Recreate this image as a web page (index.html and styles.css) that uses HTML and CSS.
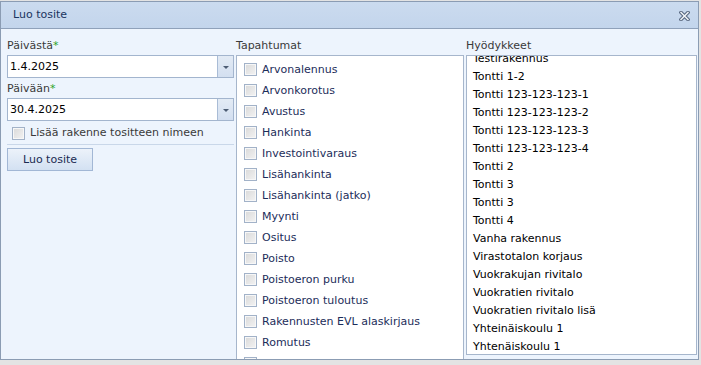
FILE: index.html
```html
<!DOCTYPE html>
<html lang="fi">
<head>
  <meta charset="UTF-8">
  <meta name="viewport" content="width=device-width, initial-scale=1.0">
  <title>Luo tosite</title>
  <link rel="stylesheet" href="styles.css">
</head>
<body>
  <div class="dialog">
    <div class="dialog-title">
      <span>Luo tosite</span>
      <span class="dialog-close">
        <svg width="11" height="10" viewBox="0 0 11 10">
          <path d="M2 1.5 L9 8.5 M9 1.5 L2 8.5" stroke="#5b6b83" stroke-width="3.6" stroke-linecap="square"/>
          <path d="M2 1.5 L9 8.5 M9 1.5 L2 8.5" stroke="#f4f7fb" stroke-width="1.4" stroke-linecap="square"/>
        </svg>
      </span>
    </div>

    <div class="dialog-body">
      <!-- vasen sarake: päivämäärät -->
      <div class="col col-form">
        <label class="field-label">Päivästä<span class="req">*</span></label>
        <div class="combo">
          <span class="combo-text">1.4.2025</span>
          <span class="combo-btn"></span>
        </div>
        <label class="field-label second">Päivään<span class="req">*</span></label>
        <div class="combo">
          <span class="combo-text">30.4.2025</span>
          <span class="combo-btn"></span>
        </div>
        <div class="check-row">
          <span class="chk"></span>
          <span>Lisää rakenne tositteen nimeen</span>
        </div>
        <div class="sep"></div>
        <button class="btn">Luo tosite</button>
      </div>

      <!-- tapahtumat -->
      <div class="col">
        <div class="col-head">Tapahtumat</div>
        <ul class="event-list">
          <li><span class="chk"></span>Arvonalennus</li>
          <li><span class="chk"></span>Arvonkorotus</li>
          <li><span class="chk"></span>Avustus</li>
          <li><span class="chk"></span>Hankinta</li>
          <li><span class="chk"></span>Investointivaraus</li>
          <li><span class="chk"></span>Lisähankinta</li>
          <li><span class="chk"></span>Lisähankinta (jatko)</li>
          <li><span class="chk"></span>Myynti</li>
          <li><span class="chk"></span>Ositus</li>
          <li><span class="chk"></span>Poisto</li>
          <li><span class="chk"></span>Poistoeron purku</li>
          <li><span class="chk"></span>Poistoeron tuloutus</li>
          <li><span class="chk"></span>Rakennusten EVL alaskirjaus</li>
          <li><span class="chk"></span>Romutus</li>
          <li><span class="chk"></span></li>
        </ul>
      </div>

      <!-- hyödykkeet -->
      <div class="col">
        <div class="col-head">Hyödykkeet</div>
        <div class="asset-box">
          <ul class="asset-list">
            <li>Testirakennus</li>
            <li>Tontti 1-2</li>
            <li>Tontti 123-123-123-1</li>
            <li>Tontti 123-123-123-2</li>
            <li>Tontti 123-123-123-3</li>
            <li>Tontti 123-123-123-4</li>
            <li>Tontti 2</li>
            <li>Tontti 3</li>
            <li>Tontti 3</li>
            <li>Tontti 4</li>
            <li>Vanha rakennus</li>
            <li>Virastotalon korjaus</li>
            <li>Vuokrakujan rivitalo</li>
            <li>Vuokratien rivitalo</li>
            <li>Vuokratien rivitalo lisä</li>
            <li>Yhteinäiskoulu 1</li>
            <li>Yhtenäiskoulu 1</li>
          </ul>
        </div>
      </div>
    </div>
  </div>
</body>
</html>
```

FILE: styles.css
```css
/* sivun tausta dialogin alla */
body { margin: 0; background: #e3e3e3; font-family: "DejaVu Sans", Verdana, sans-serif; font-size: 11px; color: #3a3a3a; }
ul { margin: 0; padding: 0; list-style: none; }

/* dialogi */
.dialog { box-sizing: border-box; width: 699px; height: 359px; margin-top: 1px; border: 1px solid #8b9cb3; background: #edf4fd; display: flex; flex-direction: column; }
.dialog-title { flex: none; height: 26px; line-height: 26px; padding: 0 8px 0 12px; border-bottom: 1px solid #8fa1ba; background: linear-gradient(#cbdbef, #c3d5ec); color: #1a3560; display: flex; justify-content: space-between; align-items: center; }
.dialog-close { display: flex; margin-top: 1px; }
.dialog-body { flex: 1; min-height: 0; overflow: hidden; padding: 9px 1px 0 6px; display: grid; grid-template-columns: 227px 228px 231px; column-gap: 2px; align-items: start; }

/* vasen sarake */
.col-form { display: flex; flex-direction: column; }
.field-label { display: block; line-height: 16px; margin-bottom: 1px; color: #3a3a3a; }
.field-label.second { margin-top: 3px; }
.req { color: #29a329; }
.combo { box-sizing: border-box; height: 23px; border: 1px solid #a3b5ce; background: #fff; display: flex; }
.combo-text { flex: 1; padding-left: 2px; line-height: 21px; color: #000; }
.combo-btn { width: 15px; border-left: 1px solid #a9bcd6; background: linear-gradient(#e3ebf5, #d3dff0); display: flex; align-items: center; justify-content: center; }
.combo-btn::before { content: ""; border-left: 3px solid transparent; border-right: 3px solid transparent; border-top: 3px solid #4d5d74; margin-top: 1px; }

.chk { box-sizing: border-box; width: 13px; height: 13px; flex: none; border: 1px solid #a2b2c8; background: linear-gradient(135deg, #d9d9d9, #f3f3f3); box-shadow: inset 0 0 0 1px #f7f7f7; }
.check-row { display: flex; align-items: center; gap: 5px; line-height: 16px; margin: 4px 0 0 5px; color: #3a3a3a; }
.sep { height: 1px; background: #c9d7e9; margin-top: 3px; }
.btn { box-sizing: border-box; width: 86px; height: 23px; margin-top: 3px; padding: 0; border: 1px solid #a2b7d5; background: linear-gradient(#ecf2fa, #d3e1f2); color: #1b2b52; font: inherit; }

/* listat */
.col-head { line-height: 16px; margin-bottom: 1px; color: #3a3a3a; }
.event-list { box-sizing: border-box; height: 320px; border: 1px solid #a6b6cc; background: #fff; padding: 3px 0 0 7px; overflow: hidden; }
.event-list li { height: 21px; display: flex; align-items: center; gap: 5px; color: #1c2d5a; }
.asset-box { box-sizing: border-box; height: 300px; border: 1px solid #a6b6cc; background: #fff; overflow: hidden; display: flex; flex-direction: column; justify-content: flex-end; }
.asset-list { margin-bottom: -2px; }
.asset-list li { height: 18px; line-height: 18px; padding-left: 6px; color: #000; white-space: nowrap; }
```
